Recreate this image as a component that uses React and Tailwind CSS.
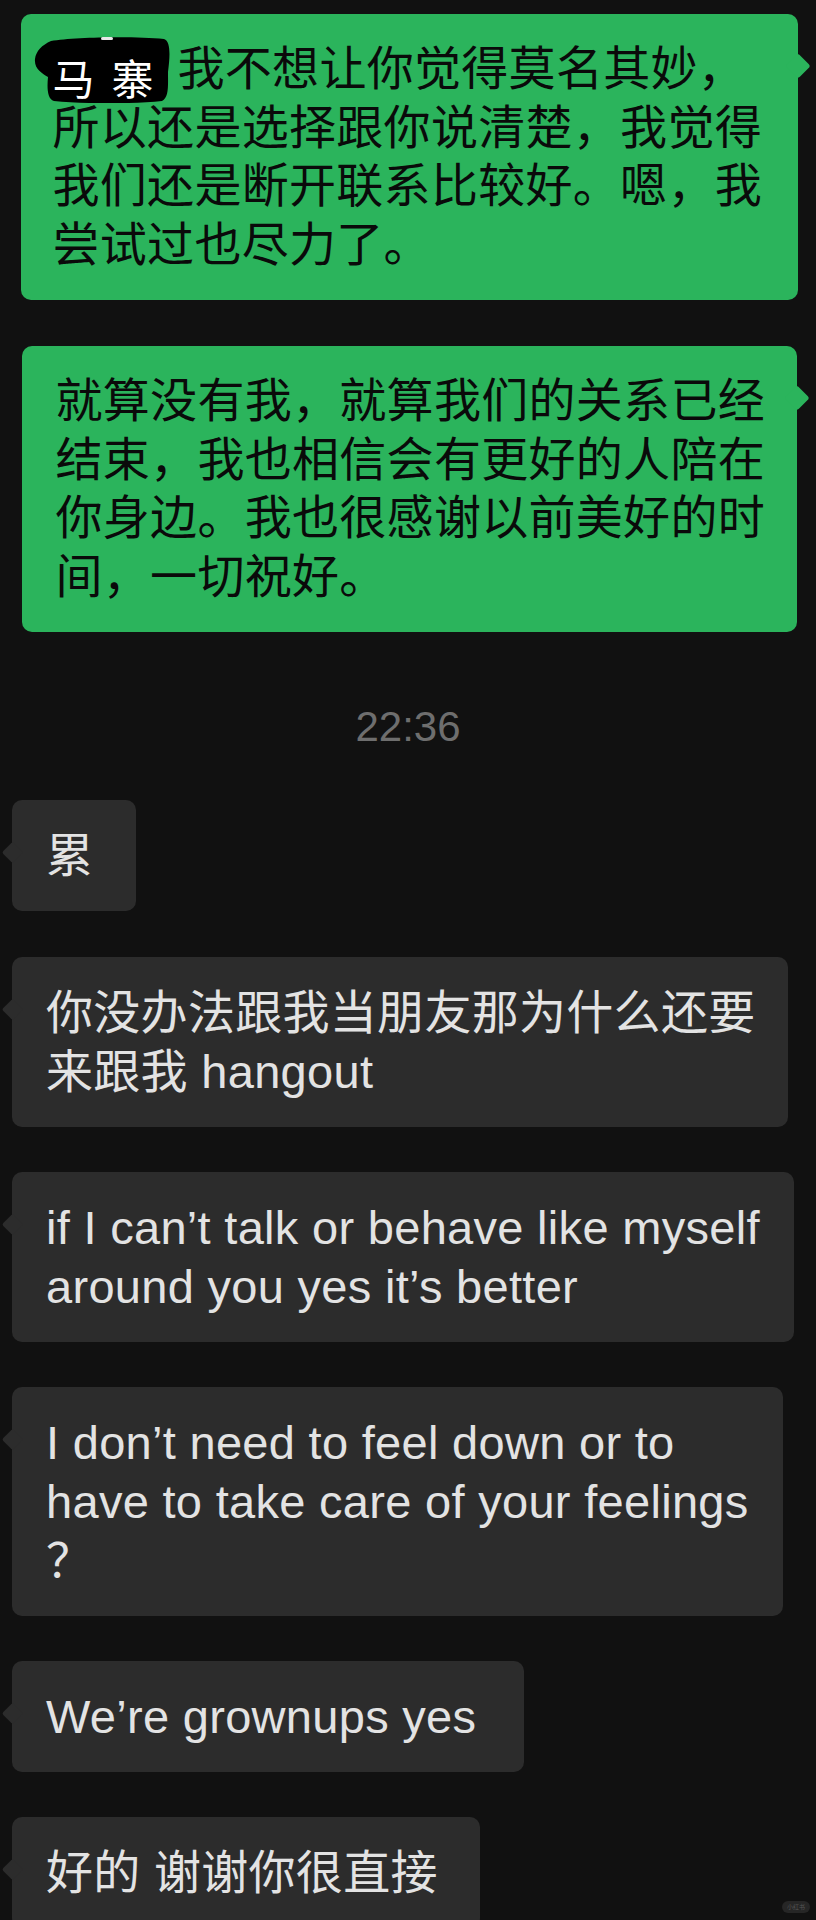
import React from "react";

function GreenBubble({ className, children }) {
  return (
    <div
      className={`relative self-end bg-[#2bb45c] rounded-[10px] py-[26px] text-[47px] leading-[58.5px] tracking-[0.3px] text-[#0a0a0a] whitespace-nowrap ${className}`}
    >
      <span className="absolute right-[-9px] top-[43px] w-[18px] h-[18px] rotate-45 rounded-[3px] bg-[#2bb45c]" />
      <div className="relative">{children}</div>
    </div>
  );
}

function GrayBubble({ className, children }) {
  return (
    <div
      className={`relative self-start ml-[12px] bg-[#2c2c2c] rounded-[10px] py-[26px] pl-[34px] text-[47px] leading-[59px] tracking-[0.3px] text-[#e3e3e3] whitespace-nowrap ${className}`}
    >
      <span className="absolute left-[-7.5px] top-[44.5px] w-[15px] h-[15px] rotate-45 rounded-[2px] bg-[#2c2c2c]" />
      <div className="relative">{children}</div>
    </div>
  );
}

export default function App() {
  return (
    <div className="relative h-[1920px] w-[816px] overflow-hidden bg-[#111111] font-['Liberation_Sans','Noto_Sans_CJK_SC',sans-serif]">
      <div className="flex flex-col pt-[14px]">
        <GreenBubble className="mr-[18px] mb-[46px] pl-[32px] pr-[36px]">
          <div className="flex items-start">
            {/* redaction scribble over the name */}
            <span className="relative inline-block w-[125px] h-[58.5px] shrink-0">
              <span className="absolute left-[-19px] top-[-3px] block w-[136px] h-[66px]">
                <svg
                  className="absolute inset-0"
                  width="136"
                  height="66"
                  viewBox="0 0 136 66"
                >
                  <path
                    d="M17,4 C40,0 100,-1 130,2 C137,4 136,20 134,35 C134,50 135,60 128,64 C100,67 50,67 20,64 C13,62 13,50 14,40 C8,36 0,32 1,22 C2,14 8,8 17,4 Z"
                    fill="#000"
                  />
                  <rect x="67" y="0" width="12" height="3" rx="1.5" fill="#e8e8e8" />
                </svg>
                <span className="absolute left-[19px] top-[23px] flex gap-[17px] text-[42px] leading-[42px] tracking-normal text-white">
                  <span>马</span>
                  <span>寨</span>
                </span>
              </span>
            </span>
            <span>我不想让你觉得莫名其妙，</span>
          </div>
          <div>所以还是选择跟你说清楚，我觉得</div>
          <div>我们还是断开联系比较好。嗯，我</div>
          <div>尝试过也尽力了。</div>
        </GreenBubble>

        <GreenBubble className="mr-[19px] pl-[34px] pr-[32px]">
          <div>就算没有我，就算我们的关系已经</div>
          <div>结束，我也相信会有更好的人陪在</div>
          <div>你身边。我也很感谢以前美好的时</div>
          <div>间，一切祝好。</div>
        </GreenBubble>

        <div className="self-center mt-[70px] mb-[48px] text-[42px] leading-[50px] text-[#6e6e6e]">
          22:36
        </div>

        <GrayBubble className="mb-[46px] pr-[43px]">
          <div>累</div>
        </GrayBubble>

        <GrayBubble className="mb-[45px] pr-[32px]">
          <div>你没办法跟我当朋友那为什么还要</div>
          <div>来跟我 hangout</div>
        </GrayBubble>

        <GrayBubble className="mb-[45px] pr-[34px]">
          <div>if I can’t talk or behave like myself</div>
          <div>around you yes it’s better</div>
        </GrayBubble>

        <GrayBubble className="mb-[45px] pr-[34px]">
          <div>I don’t need to feel down or to</div>
          <div>have to take care of your feelings</div>
          <div>？</div>
        </GrayBubble>

        <GrayBubble className="mb-[45px] pr-[48px]">
          <div>We’re grownups yes</div>
        </GrayBubble>

        <GrayBubble className="pr-[42px]">
          <div>好的 谢谢你很直接</div>
        </GrayBubble>
      </div>

      <div className="absolute right-[6px] bottom-[7px] flex h-[12px] w-[28px] items-center justify-center rounded-full bg-[#262626] text-[6px] leading-none text-[#555555]">
        小红书
      </div>
    </div>
  );
}
